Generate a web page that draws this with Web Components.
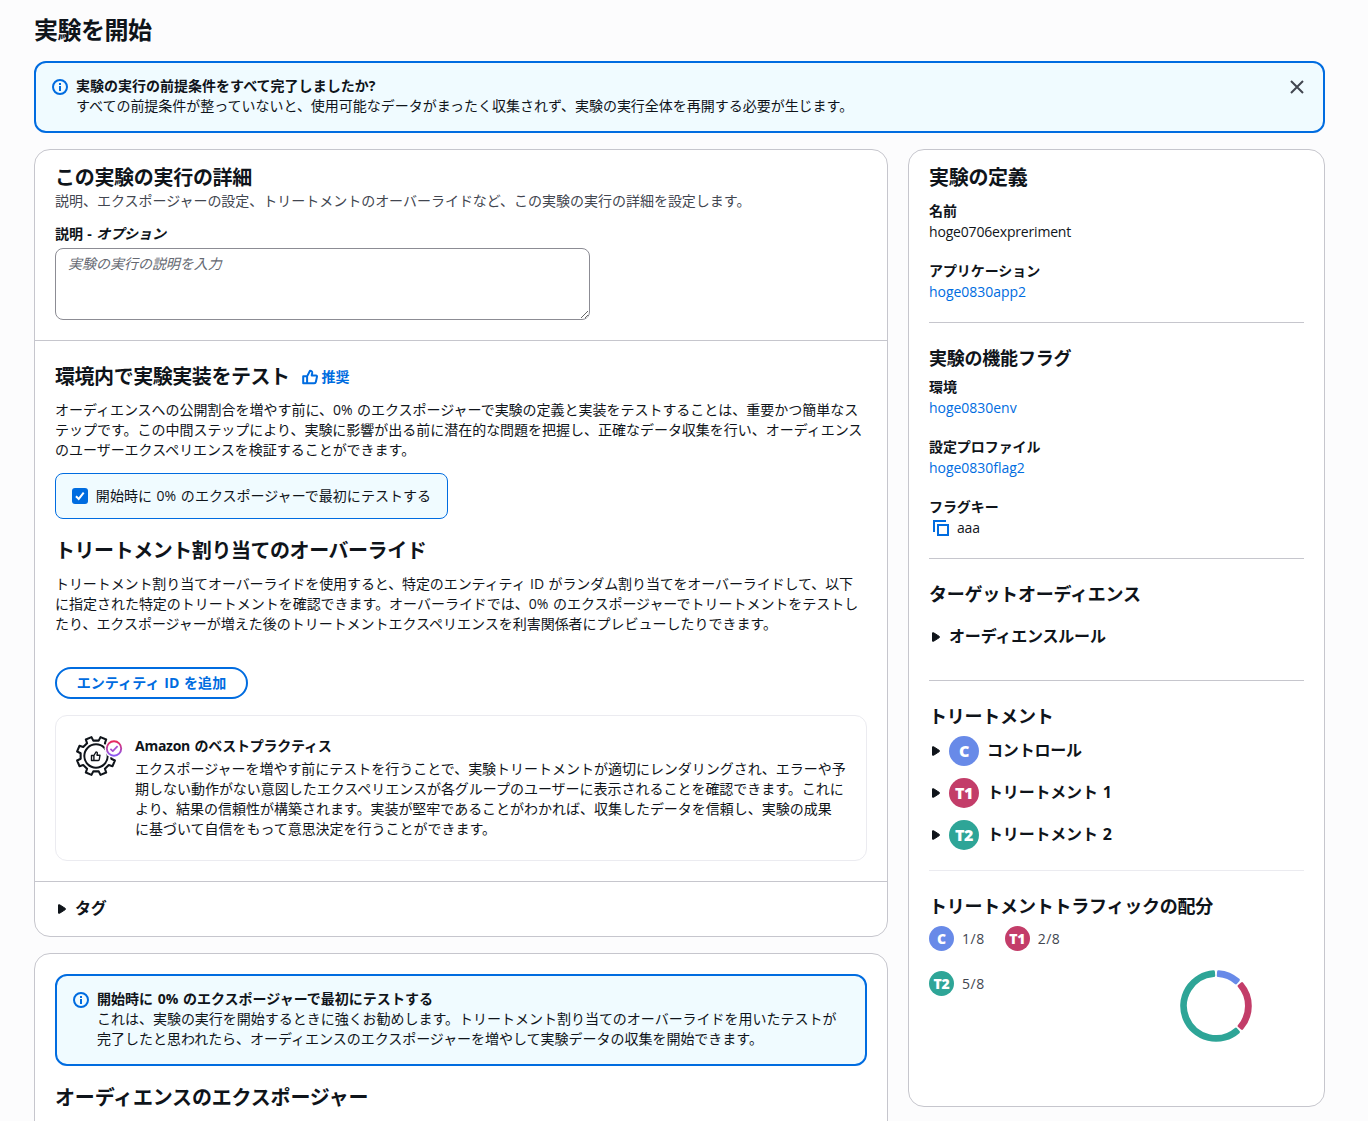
<!DOCTYPE html>
<html lang="ja">
<head>
<meta charset="utf-8">
<title>実験を開始</title>
<style>
  body {
    margin: 0;
    height: 1121px;
    overflow: hidden;
    background: #fcfcfd;
    color: #0f141a;
    font: 14px/20px "Open Sans", "Noto Sans CJK JP", sans-serif;
    letter-spacing: -0.02px;
    word-spacing: 1px;
  }
</style>
</head>
<body>
<start-experiment></start-experiment>

<script>
const ICONS = {
  info: `<circle cx="8" cy="8" r="7"/><path d="M8 7v5M8 4v2"/>`,
  close: `<path d="m2 2 12 12M14 2 2 14"/>`,
  thumb: `<path d="M1.2 7.2h3.9v7H1.2zM5.1 7.4 8 1.8c1.5 0 2.4.8 2.2 2.2l-.5 2.5h4.4c.6 0 1 .5.9 1.1l-1.1 5.2c-.2.9-.8 1.4-1.6 1.4H5.1" stroke-linejoin="round"/>`,
  copy: `<path d="M1 12V1h12M5 5h10v10H5z"/>`,
  caret: `<path d="M3.5 3.8v8.4h1.2l5.6-3.6V7.4L4.7 3.8z" fill="currentColor" stroke-width="1" stroke-linejoin="round"/>`
}

class UiIcon extends HTMLElement {
  constructor() {
    super()
    this.attachShadow({ mode: 'open' })
  }

  connectedCallback() {
    this.shadowRoot.innerHTML = `
      <style>
        :host { display: block; flex: none; width: 16px; height: 16px; }
        svg { display: block; width: 100%; height: 100%; overflow: visible; fill: none; stroke: currentColor; stroke-width: 2; }
      </style>
      <svg viewBox="0 0 16 16">${ICONS[this.getAttribute('name')]}</svg>
    `
  }
}
customElements.define('ui-icon', UiIcon)

class InfoAlert extends HTMLElement {
  constructor() {
    super()
    this.attachShadow({ mode: 'open' })
  }

  connectedCallback() {
    this.shadowRoot.innerHTML = `
      <style>
        :host { display: block; }
        .alert {
          display: flex;
          gap: 8px;
          padding: 13px 18px 15px 16px;
          border: 2px solid #006ce0;
          border-radius: 12px;
          background: #f0fbff;
        }
        .icon { color: #006ce0; margin-top: 3px; }
        .text { flex: 1; white-space: nowrap; }
        .title { font-weight: 700; letter-spacing: 0.01px; }
        .close { color: #424650; margin-top: 3px; }
      </style>
      <div class="alert">
        <ui-icon class="icon" name="info"></ui-icon>
        <div class="text">
          <div class="title"><slot name="title"></slot></div>
          <slot></slot>
        </div>
        ${this.hasAttribute('dismissible') ? '<ui-icon class="close" name="close"></ui-icon>' : ''}
      </div>
    `
  }
}
customElements.define('info-alert', InfoAlert)

class UiCard extends HTMLElement {
  constructor() {
    super()
    this.attachShadow({ mode: 'open' })
    this.shadowRoot.innerHTML = `
      <style>
        :host {
          display: block;
          box-sizing: border-box;
          border: 1px solid #c6c6cd;
          border-radius: 16px;
          background: #fff;
        }
      </style>
      <slot></slot>
    `
  }
}
customElements.define('ui-card', UiCard)

class UiExpand extends HTMLElement {
  constructor() {
    super()
    this.attachShadow({ mode: 'open' })
    this.shadowRoot.innerHTML = `
      <style>
        :host {
          display: flex;
          align-items: center;
          gap: 4px;
          font-size: 16px;
          font-weight: 700;
          letter-spacing: -0.18px;
        }
        .label { display: flex; align-items: center; margin-bottom: 2px; }
      </style>
      <ui-icon name="caret"></ui-icon>
      <slot name="badge"></slot>
      <div class="label"><slot></slot></div>
    `
  }
}
customElements.define('ui-expand', UiExpand)

class KeyValue extends HTMLElement {
  constructor() {
    super()
    this.attachShadow({ mode: 'open' })
  }

  connectedCallback() {
    this.shadowRoot.innerHTML = `
      <style>
        :host { display: block; }
        .label { margin: -1px 0 1px; font-weight: 700; letter-spacing: -0.07px; }
        .value { display: flex; letter-spacing: -0.18px; }
        :host([link]) .value { color: #006ce0; letter-spacing: -0.03px; }
      </style>
      <div class="label">${this.getAttribute('label')}</div>
      <div class="value"><slot></slot></div>
    `
  }
}
customElements.define('key-value', KeyValue)

class TreatmentBadge extends HTMLElement {
  constructor() {
    super()
    this.attachShadow({ mode: 'open' })
    this.shadowRoot.innerHTML = `
      <style>
        :host {
          display: flex;
          flex: none;
          align-items: center;
          justify-content: center;
          width: 30px;
          height: 30px;
          border-radius: 50%;
          background: #688ae8;
          color: #fff;
          font-size: 16px;
          font-weight: 800;
          letter-spacing: -0.3px;
        }
        :host([kind="t1"]) { background: #c33d69; }
        :host([kind="t2"]) { background: #2ea597; }
        :host([small]) { width: 25px; height: 25px; font-size: 14px; }
      </style>
      <slot></slot>
    `
  }
}
customElements.define('treatment-badge', TreatmentBadge)

class DonutChart extends HTMLElement {
  constructor() {
    super()
    this.attachShadow({ mode: 'open' })
  }

  connectedCallback() {
    const colors = ['#688ae8', '#c33d69', '#2ea597']
    const values = this.getAttribute('values').split(',').map(Number)
    const total = values.reduce((a, b) => a + b, 0)
    const pad = 0.075
    const point = (r, a) => `${(r * Math.sin(a)).toFixed(2)} ${(-r * Math.cos(a)).toFixed(2)}`
    let start = 0
    const arcs = values.map((value, i) => {
      const end = start + value / total * Math.PI * 2
      const a = start + pad
      const b = end - pad
      const large = b - a > Math.PI ? 1 : 0
      start = end
      return `<path fill="${colors[i]}" stroke="${colors[i]}" d="M${point(34.3, a)}A34.3 34.3 0 ${large} 1 ${point(34.3, b)}L${point(30.5, b)}A30.5 30.5 0 ${large} 0 ${point(30.5, a)}Z"/>`
    })
    this.shadowRoot.innerHTML = `
      <style>
        :host { display: block; width: 72px; height: 72px; }
        svg { display: block; stroke-width: 3; stroke-linejoin: round; }
      </style>
      <svg width="72" height="72" viewBox="-36 -36 72 72">${arcs.join('')}</svg>
    `
  }
}
customElements.define('donut-chart', DonutChart)

// Gear with a thumb inside and a gradient check badge on its shoulder
class PracticeIcon extends HTMLElement {
  constructor() {
    super()
    this.attachShadow({ mode: 'open' })
  }

  connectedCallback() {
    const points = []
    for (let i = 0; i < 8; i++) {
      const mid = 22.5 + i * 45
      for (const [r, d] of [[15.6, -12.5], [19.4, -9], [19.4, 9], [15.6, 12.5]]) {
        const a = (mid + d) * Math.PI / 180
        points.push(`${(r * Math.sin(a)).toFixed(2)} ${(-r * Math.cos(a)).toFixed(2)}`)
      }
    }
    this.shadowRoot.innerHTML = `
      <style>
        :host { display: block; flex: none; width: 48px; height: 42px; }
        svg { display: block; fill: none; stroke-linejoin: round; }
      </style>
      <svg width="48" height="42" viewBox="-21 -21 48 42">
        <defs>
          <linearGradient id="g" x1="0" y1="0" x2="0" y2="1">
            <stop offset="0" stop-color="#e8285c"/>
            <stop offset="1" stop-color="#8a5cf5"/>
          </linearGradient>
        </defs>
        <path d="M${points.join('L')}Z" stroke="#0f141a" stroke-width="2.1"/>
        <circle r="11.7" stroke="#0f141a" stroke-width="2"/>
        <path d="M-4.5-.5h2.4v5h-2.4zM-2.1-.5 0-4c1.1 0 1.5.6 1.3 1.5L1-.8h3l-.7 4.3c-.1.6-.4 1-1 1h-4.4" stroke="#0f141a" stroke-width="1.4"/>
        <circle cx="18" cy="-7.5" r="9.5" fill="#fff"/>
        <circle cx="18" cy="-7.5" r="7.2" stroke="url(#g)" stroke-width="1.9"/>
        <path d="m14.4-7.2 2.4 2.3 4.8-5" stroke="#a64fd0" stroke-width="1.7"/>
      </svg>
    `
  }
}
customElements.define('practice-icon', PracticeIcon)

class RunDetails extends HTMLElement {
  constructor() {
    super()
    this.attachShadow({ mode: 'open' })
  }

  connectedCallback() {
    this.shadowRoot.innerHTML = `
      <style>
        :host { display: block; }
        h2, p { margin: 0; }
        h2 { font-size: 20px; line-height: 24px; letter-spacing: -0.3px; white-space: nowrap; }
        h2.tight { letter-spacing: -0.45px; }
        p { white-space: nowrap; }
        section { padding: 24px 20px 20px; border-top: 1px solid #c6c6cd; }
        section:first-child { padding-top: 16px; border-top: 0; }
        .description { margin-top: 1px; color: #424650; }
        label { display: block; margin-top: 13px; font-weight: 700; letter-spacing: -0.1px; }
        textarea {
          display: block;
          box-sizing: border-box;
          width: 535px;
          height: 72px;
          margin-top: 4px;
          padding: 5px 12px;
          border: 1px solid #8c8c94;
          border-radius: 8px;
          background: #fff;
          font: inherit;
          letter-spacing: inherit;
          resize: vertical;
        }
        textarea::placeholder { color: #656871; font-style: italic; }
        .heading { display: flex; align-items: center; gap: 12px; }
        .recommended { display: flex; align-items: center; gap: 4px; color: #006ce0; font-weight: 700; }
        .body { margin-top: 11px; padding-bottom: 1px; }
        .dense { letter-spacing: -0.09px; }
        .check {
          display: flex;
          align-items: center;
          gap: 8px;
          box-sizing: border-box;
          width: 393px;
          height: 46px;
          margin: 12px 0 20px;
          padding: 0 16px 1px;
          border: 1px solid #006ce0;
          border-radius: 8px;
          background: #f0fbff;
          white-space: nowrap;
          letter-spacing: 0.02px;
        }
        .box { display: block; width: 16px; height: 16px; margin-top: 1px; border-radius: 3px; background: #006ce0; }
        button {
          display: block;
          box-sizing: border-box;
          width: 193px;
          height: 32px;
          margin: 32px 0 16px;
          padding: 0;
          border: 2px solid #006ce0;
          border-radius: 20px;
          background: #fff;
          color: #006ce0;
          font: inherit;
          font-weight: 700;
          letter-spacing: 0.07px;
          word-spacing: 1px;
        }
        .practice {
          display: flex;
          gap: 12px;
          padding: 20px 19px;
          border: 1px solid #ebebf0;
          border-radius: 12px;
        }
        .practice practice-icon { margin-top: -1px; }
        .practice p { margin-bottom: 1px; }
        .practice b { display: block; margin-bottom: 3px; letter-spacing: -0.25px; }
        section.tags { padding: 16px 20px; }
      </style>
      <ui-card>
        <section>
          <h2>この実験の実行の詳細</h2>
          <p class="description">説明、エクスポージャーの設定、トリートメントのオーバーライドなど、この実験の実行の詳細を設定します。</p>
          <label for="memo">説明 - <i>オプション</i></label>
          <textarea id="memo" placeholder="実験の実行の説明を入力"></textarea>
        </section>
        <section>
          <div class="heading">
            <h2 class="tight">環境内で実験実装をテスト</h2>
            <span class="recommended"><ui-icon name="thumb"></ui-icon>推奨</span>
          </div>
          <p class="body">オーディエンスへの公開割合を増やす前に、0% のエクスポージャーで実験の定義と実装をテストすることは、重要かつ簡単なス<br>テップです。この中間ステップにより、実験に影響が出る前に潜在的な問題を把握し、正確なデータ収集を行い、オーディエンス<br>のユーザーエクスペリエンスを検証することができます。</p>
          <div class="check">
            <svg class="box" viewBox="0 0 16 16"><path d="m4 8.2 2.8 2.8 5-6.3" fill="none" stroke="#fff" stroke-width="2"/></svg>
            開始時に 0% のエクスポージャーで最初にテストする
          </div>
          <h2 class="tight">トリートメント割り当てのオーバーライド</h2>
          <p class="body"><span class="dense">トリートメント割り当てオーバーライドを使用すると、特定のエンティティ ID がランダム割り当てをオーバーライドして、以下</span><br>に指定された特定のトリートメントを確認できます。オーバーライドでは、0% のエクスポージャーでトリートメントをテストし<br>たり、エクスポージャーが増えた後のトリートメントエクスペリエンスを利害関係者にプレビューしたりできます。</p>
          <button>エンティティ ID を追加</button>
          <div class="practice">
            <practice-icon></practice-icon>
            <p><b>Amazon のベストプラクティス</b>エクスポージャーを増やす前にテストを行うことで、実験トリートメントが適切にレンダリングされ、エラーや予<br>期しない動作がない意図したエクスペリエンスが各グループのユーザーに表示されることを確認できます。これに<br>より、結果の信頼性が構築されます。実装が堅牢であることがわかれば、収集したデータを信頼し、実験の成果<br>に基づいて自信をもって意思決定を行うことができます。</p>
          </div>
        </section>
        <section class="tags"><ui-expand>タグ</ui-expand></section>
      </ui-card>
    `
  }
}
customElements.define('run-details', RunDetails)

class AudienceExposure extends HTMLElement {
  constructor() {
    super()
    this.attachShadow({ mode: 'open' })
  }

  connectedCallback() {
    this.shadowRoot.innerHTML = `
      <style>
        :host { display: block; }
        ui-card { padding: 20px 20px 40px; }
        h2 { margin: 20px 0 0; font-size: 20px; line-height: 24px; letter-spacing: -0.18px; }
      </style>
      <ui-card>
        <info-alert>
          <span slot="title">開始時に 0% のエクスポージャーで最初にテストする</span>
          これは、実験の実行を開始するときに強くお勧めします。トリートメント割り当てのオーバーライドを用いたテストが<br>完了したと思われたら、オーディエンスのエクスポージャーを増やして実験データの収集を開始できます。
        </info-alert>
        <h2>オーディエンスのエクスポージャー</h2>
      </ui-card>
    `
  }
}
customElements.define('audience-exposure', AudienceExposure)

class ExperimentSummary extends HTMLElement {
  constructor() {
    super()
    this.attachShadow({ mode: 'open' })
  }

  connectedCallback() {
    this.shadowRoot.innerHTML = `
      <style>
        :host { display: block; }
        ui-card { height: 958px; padding: 16px 20px 0; }
        h2, h3 { margin: 0; white-space: nowrap; }
        h2 { margin-bottom: 12px; font-size: 20px; line-height: 24px; letter-spacing: -0.3px; }
        h3 { margin-bottom: 9px; font-size: 18px; line-height: 22px; letter-spacing: -0.22px; }
        hr { margin: 20px 0 24px; border: 0; border-top: 1px solid #c6c6cd; }
        hr.light { border-color: #ebebf0; }
        .list { display: grid; gap: 20px; }
        .list ui-icon { margin: 2px 8px 0 4px; color: #006ce0; }
        .rule { margin: 21px 0 32px; }
        .treatments { display: grid; gap: 12px; }
        .treatments span { margin-left: 4px; }
        .split { display: flex; justify-content: space-between; }
        .legend { display: flex; flex-wrap: wrap; align-content: flex-start; width: 160px; gap: 20px; color: #424650; }
        .legend div { display: flex; align-items: center; gap: 8px; height: 25px; letter-spacing: 0.5px; }
        donut-chart { margin: 44px 52px 0 0; }
      </style>
      <ui-card>
        <h2>実験の定義</h2>
        <div class="list">
          <key-value label="名前">hoge0706expreriment</key-value>
          <key-value label="アプリケーション" link>hoge0830app2</key-value>
        </div>
        <hr>
        <h3>実験の機能フラグ</h3>
        <div class="list">
          <key-value label="環境" link>hoge0830env</key-value>
          <key-value label="設定プロファイル" link>hoge0830flag2</key-value>
          <key-value label="フラグキー"><ui-icon name="copy"></ui-icon>aaa</key-value>
        </div>
        <hr>
        <h3>ターゲットオーディエンス</h3>
        <ui-expand class="rule">オーディエンスルール</ui-expand>
        <hr>
        <h3>トリートメント</h3>
        <div class="treatments">
          <ui-expand><treatment-badge slot="badge">C</treatment-badge><span>コントロール</span></ui-expand>
          <ui-expand><treatment-badge slot="badge" kind="t1">T1</treatment-badge><span>トリートメント 1</span></ui-expand>
          <ui-expand><treatment-badge slot="badge" kind="t2">T2</treatment-badge><span>トリートメント 2</span></ui-expand>
        </div>
        <hr class="light">
        <h3>トリートメントトラフィックの配分</h3>
        <div class="split">
          <div class="legend">
            <div><treatment-badge small>C</treatment-badge><span>1/8</span></div>
            <div><treatment-badge small kind="t1">T1</treatment-badge><span>2/8</span></div>
            <div><treatment-badge small kind="t2">T2</treatment-badge><span>5/8</span></div>
          </div>
          <donut-chart values="1,2,5"></donut-chart>
        </div>
      </ui-card>
    `
  }
}
customElements.define('experiment-summary', ExperimentSummary)

class StartExperiment extends HTMLElement {
  constructor() {
    super()
    this.attachShadow({ mode: 'open' })
  }

  connectedCallback() {
    this.shadowRoot.innerHTML = `
      <style>
        :host { display: block; padding: 15px 43px 0 34px; }
        h1 { margin: 0 0 16px; font-size: 24px; line-height: 30px; letter-spacing: -0.48px; }
        .columns { display: flex; align-items: flex-start; gap: 20px; margin-top: 16px; }
        .main { display: grid; gap: 16px; width: 854px; }
        experiment-summary { width: 417px; }
      </style>
      <h1>実験を開始</h1>
      <info-alert dismissible>
        <span slot="title">実験の実行の前提条件をすべて完了しましたか?</span>
        すべての前提条件が整っていないと、使用可能なデータがまったく収集されず、実験の実行全体を再開する必要が生じます。
      </info-alert>
      <div class="columns">
        <div class="main">
          <run-details></run-details>
          <audience-exposure></audience-exposure>
        </div>
        <experiment-summary></experiment-summary>
      </div>
    `
  }
}
customElements.define('start-experiment', StartExperiment)
</script>
</body>
</html>
